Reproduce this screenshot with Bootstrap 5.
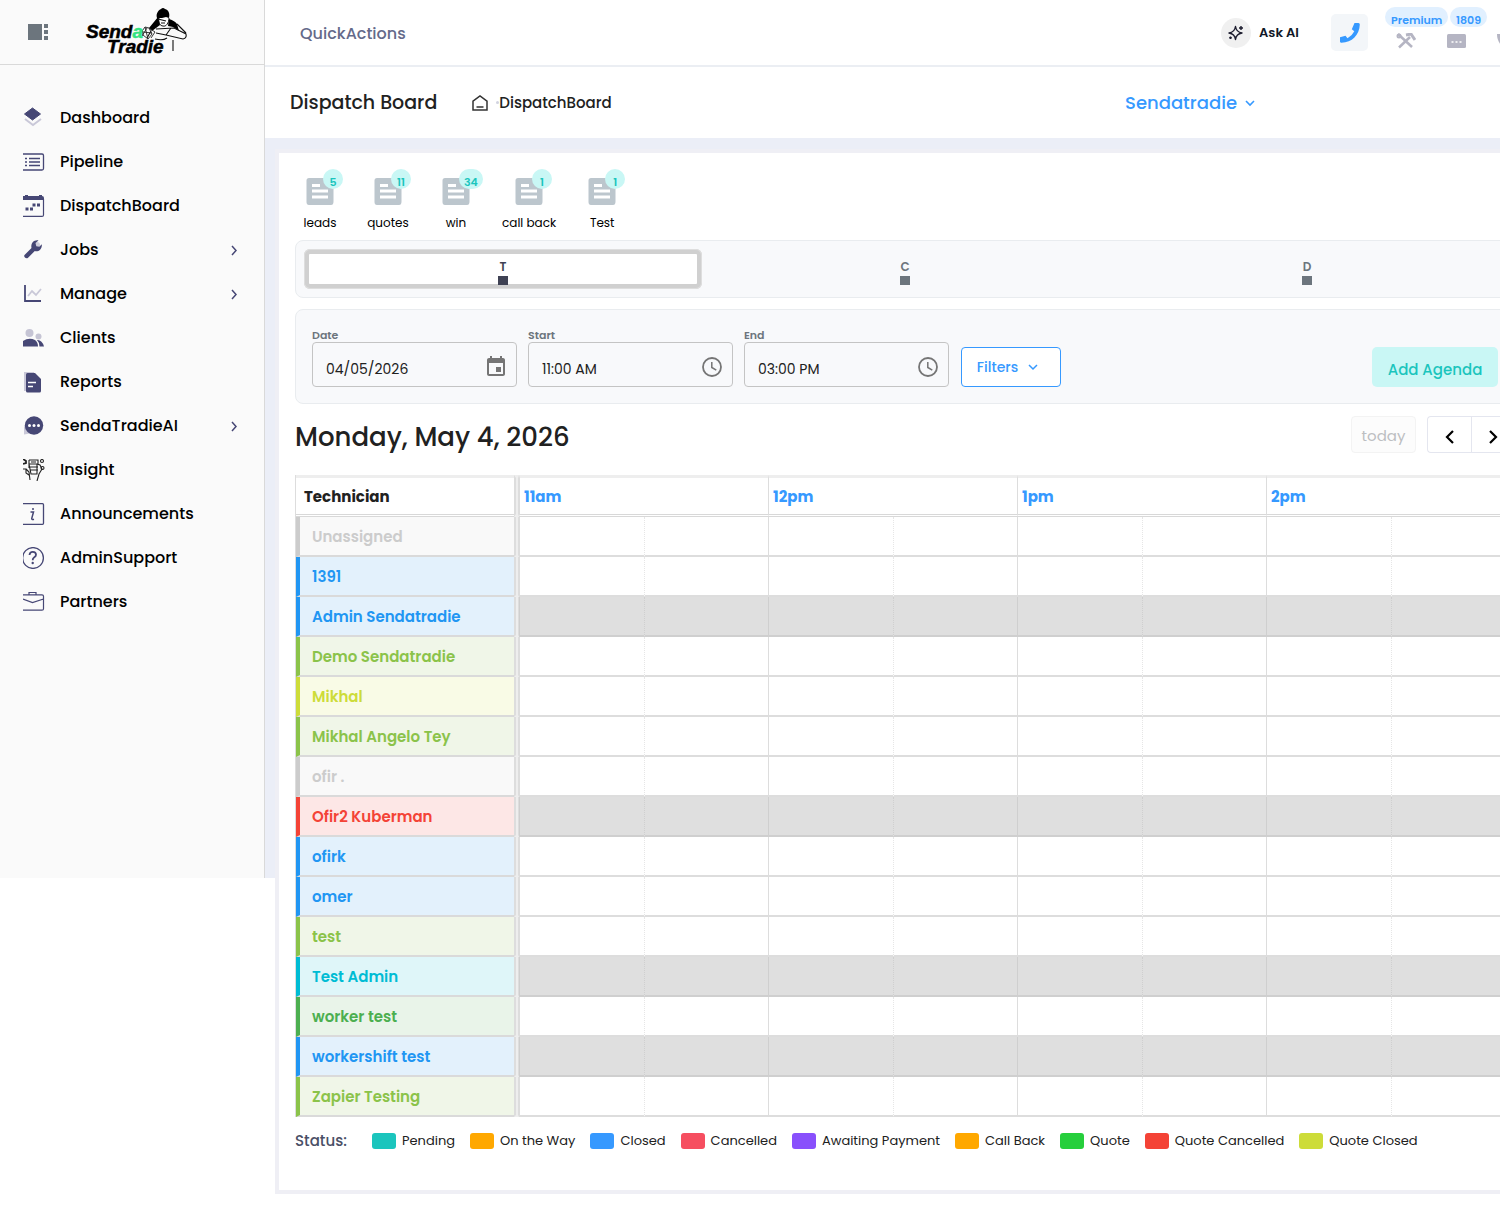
<!DOCTYPE html>
<html lang="en">
<head>
<meta charset="utf-8">
<meta name="viewport" content="width=device-width, initial-scale=1">
<title>Dispatch Board</title>
<link href="https://cdn.jsdelivr.net/npm/bootstrap@5.3.0/dist/css/bootstrap.min.css" rel="stylesheet">
<style>
:root{--shell-h:878px;--ink:#212121;--blue:#3699ff;--navy:#464775}
body{font-family:Poppins,Inter,"Open Sans",sans-serif;font-size:16px;line-height:24px;color:var(--ink);background:#fff;overflow:hidden}
svg{display:block;flex:none}
.side-pane{width:265px;height:var(--shell-h);background:#fafafa;border-right:1px solid #d9d9d9}
.side-head{height:65px;border-bottom:1px solid #d9d9d9;padding-left:28px;gap:37px}
.side-nav{padding:31px 0 0 23px}
.side-link{height:44px;color:#000;font-weight:500;font-size:16px;text-decoration:none;padding-right:26px}
.side-link svg:first-child{margin-right:15px}
.main-pane{min-width:0;overflow:hidden;min-height:1219px;background:linear-gradient(#ebeef7,#ebeef7) 0 0/100% var(--shell-h) no-repeat}
/* the board is wider than its pane and runs out on the right */
.wide-area{margin-right:-31px}
.top-bar{height:67px;border-bottom:2px solid #ebeef3;background:#fff;padding-left:35px}
.quick-link{font-size:16px;font-weight:500;color:#646a8a;text-decoration:none;padding-top:2px}
.ask-btn{font-size:13px;font-weight:600;color:#111827;margin-right:32px}
.ask-disc{width:30px;height:30px;background:#f0f0f0}
.call-btn{width:37px;height:37px;background:#f3f6f9;border-radius:5px;margin-right:13px}
.tool-btn{width:50px;height:67px;padding-top:16px}
.tool-tag{top:8px;left:19px;height:20px;border-radius:10px;background:#e1f0ff;color:var(--blue);font-size:11px;line-height:26px;font-weight:600;padding:0 6px;min-width:20px}
.tool-tag.wide-tag{left:4px}
.sub-bar{height:71px;background:#fff;padding-left:25px}
.page-title{font-size:19px;font-weight:500;margin:0 35px 0 0;padding-top:2px}
.crumb-link{color:var(--ink);font-weight:500;font-size:15px;text-decoration:none}
.crumb-dot{width:3px;height:3px;border-radius:2px;background:#d1d3e0;margin-left:8px}
.org-btn{margin-right:276px;color:var(--blue);font-size:18px;font-weight:500}
.board-card{margin:15px 0 0 14px;padding:16px;background:#fff;height:1037px;box-shadow:0 0 0 4px #efeff5}
.counter-row{padding-left:3px;gap:24px;height:71px}
.counter-btn{min-width:44px;font-size:12px;line-height:18px;color:#000;padding-top:8px}
.counter-btn svg{margin-bottom:9px}
.counter-tag{top:0;left:calc(50% + 3px);min-width:20px;height:20px;border-radius:10px;background:#c9f7f5;color:#1bc5bd;font-size:11px;line-height:26px;font-weight:600;padding:0 5px}
.soft-panel{border:1px solid #e9ecef;border-radius:8px;background:#f8f9fb}
.tab-strip{height:58px;padding:8px;gap:4px}
.tab-btn{flex:1;border:0;background:none;border-radius:6px;font-size:12px;font-weight:600;line-height:14px;color:#6c757d;padding:7px 0 0}
.tab-btn.on{background:#fff;color:#3f4254;box-shadow:inset 0 0 0 1px #dedede,inset 0 0 0 5px #d0d0d0}
.tab-btn i{width:10px;height:9px;background:currentColor;margin-top:2px}
.filter-panel{height:95px;margin-top:11px;padding:16px;gap:12px}
.field-box{width:205px;margin-right:-1px}
.field-box label{display:block;font-size:11px;font-weight:600;line-height:18px;height:16px;color:#6c757d}
.field-box input{width:100%;height:45px;border:1px solid #c4c4c4;border-radius:4px;background:transparent;padding:9px 40px 0 13px;font-size:14px;color:var(--ink)}
.field-box svg{right:9px;top:13px}
.filters-btn{width:100px;height:40px;margin-top:21px;margin-left:1px;border:1px solid var(--blue);border-radius:4px;background:#fff;color:var(--blue);font-size:14px;font-weight:500;padding:0 6px 0 0;gap:9px}
.agenda-btn{width:126px;height:40px;margin-top:21px;border:0;border-radius:5px;background:#c9f7f5;color:#1bc5bd;font-size:15px;font-weight:500;padding:5px 0 0}
.date-row{height:71px;padding-bottom:10px}
.date-title{font-size:26px;font-weight:500;line-height:36px;margin:0;padding-top:4px}
.today-btn{height:37px;width:65px;border:1px solid #f3f3f3;border-radius:4px;background:#fcfcfc;color:#bdbfc2;font-size:15px;padding:2px 0 0;margin-right:11px}
.step-btn{height:37px;width:44px;border:1px solid #e4e6ef;background:#fff;padding:4px 0 0}
.step-btn:first-child{border-radius:4px 0 0 4px;border-right:0}
.sched{width:100%;table-layout:fixed;border-collapse:separate;border-spacing:0;border-left:1px solid #ddd}
.sched th,.sched td{height:40px;padding:2px 0 0;border-bottom:2px solid #ddd;font-size:15px;line-height:22px;white-space:nowrap}
.sched thead th{height:42px;border-top:3px solid #eee;border-bottom:3px double #d8d8d8;font-weight:700;color:var(--blue);padding-left:4px;border-left:1px solid #ddd}
.sched thead th.who-head{color:var(--ink);padding-left:8px;border-left:0}
.sched .rail{border-left:2px solid #ddd!important;border-right:1px solid #ddd;background:#eee;border-bottom-color:#eee!important;padding:0!important}
.sched td{border-left:1px dotted #e6e6e6}
.sched td.hour{border-left:1px solid #ddd}
.sched tr.off td.slot{background:#dfdfdf;border-color:#cfcfcf}
.sched tbody th{border-left:4px solid;padding-left:12px;font-weight:600}
.sched tbody th.who{border-bottom-color:#dadada}
.c-gray{color:#ccc;background:#f9f9f9}.c-blue{color:#2196f3;background:#e3f1fc}.c-green{color:#8bc34a;background:#f0f6e8}
.c-lime{color:#cddc39;background:#f9fbe6}.c-red{color:#f44336;background:#fde7e6}.c-cyan{color:#00bcd4;background:#dff6f9}.c-leaf{color:#4caf50;background:#e9f4e9}
.status-row{height:48px;font-size:13px}
.status-head{font-size:15px;font-weight:500;color:#4a4f66;width:77px}
.status-item{margin-right:15px;gap:6px}
.status-item i{width:24px;height:16px;border-radius:3px}
</style>
<script src="https://cdn.jsdelivr.net/npm/bootstrap@5.3.0/dist/js/bootstrap.bundle.min.js"></script>
</head>
<body>
<div class="d-flex align-items-start">
<aside class="side-pane flex-shrink-0">
  <div class="side-head d-flex align-items-center">
    <button class="btn p-0 border-0" aria-label="Toggle menu"><svg width="20" height="16"><path fill="#6c757d" d="M0 0h14v16H0zM16 0h4v4h-4zM16 6h4v4h-4zM16 12h4v4h-4z"/></svg></button>
    <a href="#" class="text-decoration-none" aria-label="Senda Tradie">
      <svg width="104" height="54" viewBox="0 0 104 54">
        <path d="M72 13c-1-3 0-7 4-9q2-2 4 0c4 1 5 5 4 9l-3-1-8 2z" fill="#000"/>
        <path d="M74 13c-1 4 1 8 4 8 3 1 6-3 6-8" fill="#fff" stroke="#111"/>
        <path d="M73 14l8 2M76 18h4" stroke="#111" stroke-width="1.200"/>
        <path d="M73 12l-9 11 3 3 8-6zM84 14q6 2 8 5l2 7-6-4-5-1z" fill="#000"/>
        <path d="M71 24l18-1 12 6q1 4-3 5l-17-4-10-2M92 19l9 9M70 34q8 2 12-1M88 35v11M66 26l-4 7M86 23l-5 7" fill="none" stroke="#111" stroke-width="1.100"/>
        <path d="M60 22q-4 3-2 8l5 4 4-5-3-6zM60 22l3 12M64 23l6 4-4 6M58 27l9 1M57 31l5-8" fill="none" stroke="#222" stroke-width=".9"/>
        <g font-family="Liberation Sans,sans-serif" font-weight="bold" font-style="italic" font-size="19" stroke-width=".5"><text x="1" y="33" stroke="#000">Send<tspan fill="#33e381" stroke="#33e381">a</tspan></text><text x="22" y="48" stroke="#000">Tradie</text></g>
      </svg>
    </a>
  </div>
  <nav class="side-nav d-flex flex-column">
    <a href="#" class="side-link d-flex align-items-center"><svg width="22" height="22"><path d="M2 12l8 6 8-6" fill="none" stroke="#c9c8d8" stroke-width="2"/><path d="M9.500 1l8 6-8 6-8-6z" fill="#464775" stroke="#464775" stroke-linejoin="round"/></svg>Dashboard</a>
    <a href="#" class="side-link d-flex align-items-center"><svg width="22" height="22" fill="none" stroke="#464775"><path d="M0 3h19q1.500 0 1.500 1.500v13q0 1.500-1.500 1.500H0" stroke-width="1.300"/><path d="M2 7.500h2M6 7.500h11M2 11h2M6 11h11M2 14.500h2M6 14.500h11" stroke-width="1.500"/></svg>Pipeline</a>
    <a href="#" class="side-link d-flex align-items-center"><svg width="22" height="22"><path d="M0 1h2V0h3v1h11V0h3v1q2 0 2 2v2H0z" fill="#464775"/><path d="M0 21.400h19q1.500 0 1.500-1.500V4" fill="none" stroke="#464775" stroke-width="1.200"/><path d="M2.500 12.500h3v3h-3zM7 12.500h3v3H7zM9.500 8.500h3v3h-3zM14 8.500h3v3h-3z" fill="#464775"/></svg>DispatchBoard</a>
    <a href="#" class="side-link d-flex align-items-center"><svg width="22" height="22"><circle cx="14" cy="6" r="3" fill="#cfcfdc"/><path d="M1.500 17l7-7c-1-4 2-8.500 7-7.500L12.500 5l.8 3.200 3 .6 2.500-2.500c.5 5-3.500 7.700-7 6.700l-7 7c-2 1-4.500-1-3.300-3z" fill="#464775" transform="translate(0,-1)"/></svg>Jobs<svg class="ms-auto" width="8" height="12" fill="none" stroke="#464775" stroke-width="1.500"><path d="M2 2l4 4.500L2 11"/></svg></a>
    <a href="#" class="side-link d-flex align-items-center"><svg width="22" height="22" fill="none"><path d="M2 2v16h16" stroke="#464775" stroke-width="1.800"/><path d="M5 13l4-5 4 4 5-6" stroke="#c9c8d8" stroke-width="1.800"/></svg>Manage<svg class="ms-auto" width="8" height="12" fill="none" stroke="#464775" stroke-width="1.500"><path d="M2 2l4 4.500L2 11"/></svg></a>
    <a href="#" class="side-link d-flex align-items-center"><svg width="22" height="22"><g fill="#c5c4d4"><circle cx="6.500" cy="6" r="4"/><circle cx="15.500" cy="9.500" r="3"/></g><path d="M0 19.500V14q6-4 12-1 3 2 3 6.500zM14 13q5-.5 7 6.500h-4.500q0-4-2.500-6.500z" fill="#464775"/></svg>Clients</a>
    <a href="#" class="side-link d-flex align-items-center"><svg width="22" height="22"><path d="M1 1h10v4L4 20H1z" fill="#c9c8d8"/><path d="M4.500 2H12l6 6v12q0 1.500-1.500 1.500h-12Q3 21.500 3 20V3.500Q3 2 4.500 2z" fill="#464775"/><path d="M5 11.500h8M5 15.500h5" stroke="#fff" stroke-width="1.600"/></svg>Reports</a>
    <a href="#" class="side-link d-flex align-items-center"><svg width="22" height="22"><path d="M1 19.500V11l9 7z" fill="#c9c8d8"/><circle cx="11" cy="10.500" r="9.200" fill="#464775"/><g fill="#fff"><circle cx="6.500" cy="10.500" r="1.500"/><circle cx="11" cy="10.500" r="1.500"/><circle cx="15.500" cy="10.500" r="1.500"/></g></svg>SendaTradieAI<svg class="ms-auto" width="8" height="12" fill="none" stroke="#464775" stroke-width="1.500"><path d="M2 2l4 4.500L2 11"/></svg></a>
    <a href="#" class="side-link d-flex align-items-center"><svg width="22" height="22" fill="none" stroke="#222" stroke-width="1.100"><path d="M6 1h9v4M6 1v8M8 3h5M6 5h8v10H8zM7 8h8M7 11h8M14 5l3 1 2 4-3 5-2 7M3 10l3 3 1 8M0 10h3v4l3 2"/><path d="M0 0l3 2v2L0 5" stroke-width="1.800"/><circle cx="19" cy="2" r="1.500"/><circle cx="19.500" cy="9" r="1.500"/></svg>Insight</a>
    <a href="#" class="side-link d-flex align-items-center"><svg width="22" height="22" fill="none" stroke="#464775" stroke-width="1.300"><path d="M0 .7h19.500q1 0 1 1v18.600q0 1-1 1H0"/><path d="M7.500 9h3L8.700 15.500q0 1.500 2.300.8" stroke-width="1.500"/><circle cx="10" cy="6" r="1" fill="#464775" stroke="none"/></svg>Announcements</a>
    <a href="#" class="side-link d-flex align-items-center"><svg width="22" height="22" fill="none" stroke="#464775"><circle cx="10" cy="11" r="10.400" stroke-width="1.300"/><path d="M6.500 8q.3-3.200 3.300-3.200 3.200 0 3.200 2.900 0 1.600-2 2.800-1.300.8-1.300 2.700" stroke-width="1.800"/><circle cx="9.700" cy="16" r="1.200" fill="#464775" stroke="none"/></svg>AdminSupport</a>
    <a href="#" class="side-link d-flex align-items-center"><svg width="22" height="22" fill="none" stroke="#464775" stroke-width="1.200"><path d="M0 3.800h19q1.500 0 1.500 1.500v12.400q0 1.500-1.500 1.500H0M6 3.800V1.500h7v2.300M0 8l9.500 3.500L20.500 8"/></svg>Partners</a>
  </nav>
</aside>

<main class="main-pane flex-fill">
<div class="wide-area">
  <header class="top-bar d-flex align-items-center">
    <a href="#" class="quick-link me-auto">QuickActions</a>
    <button class="ask-btn btn border-0 p-0 d-flex align-items-center gap-2">
      <span class="ask-disc rounded-circle d-flex align-items-center justify-content-center"><svg width="18" height="18" fill="none" stroke="#1c1c2e" stroke-width="1.400" stroke-linejoin="round"><path d="M8.500 2.500q.8 5.700 6.500 6.500-5.700.8-6.500 6.500Q7.700 9.800 2 9q5.700-.8 6.500-6.500z"/><path d="M14 2v4M12 4h4M3.500 12.500v2.600M2.200 13.800h2.600"/></svg></span>Ask AI
    </button>
    <button class="call-btn btn border-0 p-0 d-flex align-items-center justify-content-center" aria-label="Call"><svg width="22" height="22"><path fill="#3699ff" d="M15.500 1h4q1.300 0 1.300 1.500C20.500 13 13 20.500 2.500 20.800 1.500 20.800 1 20 1 19.500v-4.200l5.500-1.500 2 2.400q4.700-2.600 6.800-7l-2.500-2z"/></svg></button>
    <button class="tool-btn btn border-0 px-0 pb-0 position-relative d-flex align-items-center justify-content-center" aria-label="Tools"><svg width="20" height="16" fill="none" stroke="#b5b5c3"><path d="M2 1l14 13" stroke-width="2.500"/><path d="M3 14.500L14 4" stroke-width="2.500"/><path d="M10 2l5-1 4 6" stroke-width="3"/><circle cx="3" cy="3" r="1.500" stroke-width="2"/></svg><span class="tool-tag wide-tag position-absolute">Premium</span></button>
    <button class="tool-btn btn border-0 px-0 pb-0 position-relative d-flex align-items-center justify-content-center" aria-label="Messages"><svg width="19" height="14"><rect width="19" height="14" rx="1.500" fill="#b5b5c3"/><path d="M4.500 8h2M8.500 8h2M12.500 8h2" stroke="#fff" stroke-width="1.600"/></svg><span class="tool-tag position-absolute">1809</span></button>
    <button class="tool-btn btn border-0 px-0 pb-0 position-relative d-flex align-items-center justify-content-center" aria-label="Alerts"><svg width="20" height="16"><path d="M1 1h18q0 10-9 14Q1 11 1 1z" fill="#b5b5c3"/></svg><span class="tool-tag position-absolute"></span></button>
  </header>

  <div class="sub-bar d-flex align-items-center">
    <h1 class="page-title">Dispatch Board</h1>
    <a href="#" aria-label="Home"><svg width="16" height="16" fill="none" stroke="#333" stroke-width="1.500"><path d="M1 6.200L8 1l7 5.200V15H1zM4.500 12h7"/></svg></a>
    <span class="crumb-dot"></span><a href="#" class="crumb-link">DispatchBoard</a>
    <button class="org-btn ms-auto btn border-0 p-0 d-flex align-items-center gap-2">Sendatradie<svg width="10" height="8" fill="none" stroke="#3699ff" stroke-width="1.600"><path d="M1 2l4 4 4-4"/></svg></button>
  </div>

  <section class="board-card">
    <div class="counter-row d-flex align-items-start" id="counters"></div>

    <div class="soft-panel tab-strip d-flex" role="tablist">
      <button class="tab-btn on d-flex flex-column align-items-center justify-content-center" role="tab">T<i></i></button>
      <button class="tab-btn d-flex flex-column align-items-center justify-content-center" role="tab">C<i></i></button>
      <button class="tab-btn d-flex flex-column align-items-center justify-content-center" role="tab">D<i></i></button>
    </div>

    <form class="soft-panel filter-panel d-flex align-items-start">
      <div class="field-box"><label for="f-date">Date</label><div class="position-relative"><input id="f-date" type="text" value="04/05/2026"><svg class="position-absolute" width="24" height="24"><path fill="#757575" d="M19 3h-1V1h-2v2H8V1H6v2H5c-1.100 0-2 .9-2 2v14c0 1.100.9 2 2 2h14c1.100 0 2-.9 2-2V5c0-1.100-.9-2-2-2zm0 16H5V8h14v11zm-2-7h-5v5h5z"/></svg></div></div>
      <div class="field-box"><label for="f-start">Start</label><div class="position-relative"><input id="f-start" type="text" value="11:00 AM"><svg class="position-absolute" width="24" height="24" fill="none" stroke="#757575"><circle cx="12" cy="12" r="9" stroke-width="1.800"/><path d="M11.800 7v5.500l4.500 2.700" stroke-width="1.500"/></svg></div></div>
      <div class="field-box"><label for="f-end">End</label><div class="position-relative"><input id="f-end" type="text" value="03:00 PM"><svg class="position-absolute" width="24" height="24" fill="none" stroke="#757575"><circle cx="12" cy="12" r="9" stroke-width="1.800"/><path d="M11.800 7v5.500l4.500 2.700" stroke-width="1.500"/></svg></div></div>
      <button type="button" class="filters-btn d-flex align-items-center justify-content-center">Filters<svg width="12" height="8" fill="none" stroke="#3699ff" stroke-width="1.500"><path d="M2 2l4 4 4-4"/></svg></button>
      <button type="button" class="agenda-btn ms-auto">Add Agenda</button>
    </form>

    <div class="date-row d-flex align-items-center">
      <h2 class="date-title me-auto">Monday, May 4, 2026</h2>
      <button class="today-btn" disabled>today</button>
      <div class="d-flex"><button class="step-btn d-flex align-items-center justify-content-center" aria-label="Previous"><svg width="10" height="14" fill="none" stroke="#000" stroke-width="2.200"><path d="M8 1L2 7l6 6"/></svg></button><button class="step-btn d-flex align-items-center justify-content-center" aria-label="Next"><svg width="10" height="14" fill="none" stroke="#000" stroke-width="2.200"><path d="M2 1l6 6-6 6"/></svg></button></div>
    </div>

    <table class="sched">
      <colgroup><col style="width:218px"><col style="width:5px"><col span="8"></colgroup>
      <thead><tr><th class="who-head">Technician</th><th class="rail"></th><th colspan="2">11am</th><th colspan="2">12pm</th><th colspan="2">1pm</th><th colspan="2">2pm</th></tr></thead>
      <tbody id="rows"></tbody>
    </table>

    <div class="status-row d-flex align-items-center" id="legend"><span class="status-head">Status:</span></div>
  </section>
</div>
</main>
</div>
<script>
const counters=[['leads',5],['quotes',11],['win',34],['call back',1],['Test',1]];
document.getElementById('counters').innerHTML=counters.map(([n,v])=>`<button class="counter-btn btn border-0 px-0 pb-0 position-relative d-flex flex-column align-items-center"><svg width="28" height="28"><path fill="#bcc6cd" fill-rule="evenodd" d="M3 1h22q2.500 0 2.500 2.500v21Q27.500 28 25 28H3Q.5 28 .5 25V3.500Q.5 1 3 1zM6 7v3h8V7zM6 12.500v3h16v-3zM6 18.500v3h16v-3z"/></svg>${n}<span class="counter-tag position-absolute">${v}</span></button>`).join('');
const people=[['Unassigned','gray'],['1391','blue'],['Admin Sendatradie','blue',1],['Demo Sendatradie','green'],['Mikhal','lime'],['Mikhal Angelo Tey','green'],['ofir .','gray'],['Ofir2 Kuberman','red',1],['ofirk','blue'],['omer','blue'],['test','green'],['Test Admin','cyan',1],['worker test','leaf'],['workershift test','blue',1],['Zapier Testing','green']];
const slots='<td class="slot hour"></td><td class="slot"></td>'.repeat(4);
document.getElementById('rows').innerHTML=people.map(([n,c,off])=>`<tr class="${off?'off':''}"><th class="who c-${c}" style="border-left-color:currentColor">${n}</th><td class="rail"></td>${slots}</tr>`).join('');
const states=[['Pending','#1bc5bd'],['On the Way','#ffa800'],['Closed','#3699ff'],['Cancelled','#f64e60'],['Awaiting Payment','#8950fc'],['Call Back','#ffa800'],['Quote','#26cf3c'],['Quote Cancelled','#f44336'],['Quote Closed','#cddc39']];
document.getElementById('legend').insertAdjacentHTML('beforeend',states.map(([n,c])=>`<span class="status-item d-flex align-items-center"><i style="background:${c}"></i>${n}</span>`).join(''));
</script>
</body>
</html>
